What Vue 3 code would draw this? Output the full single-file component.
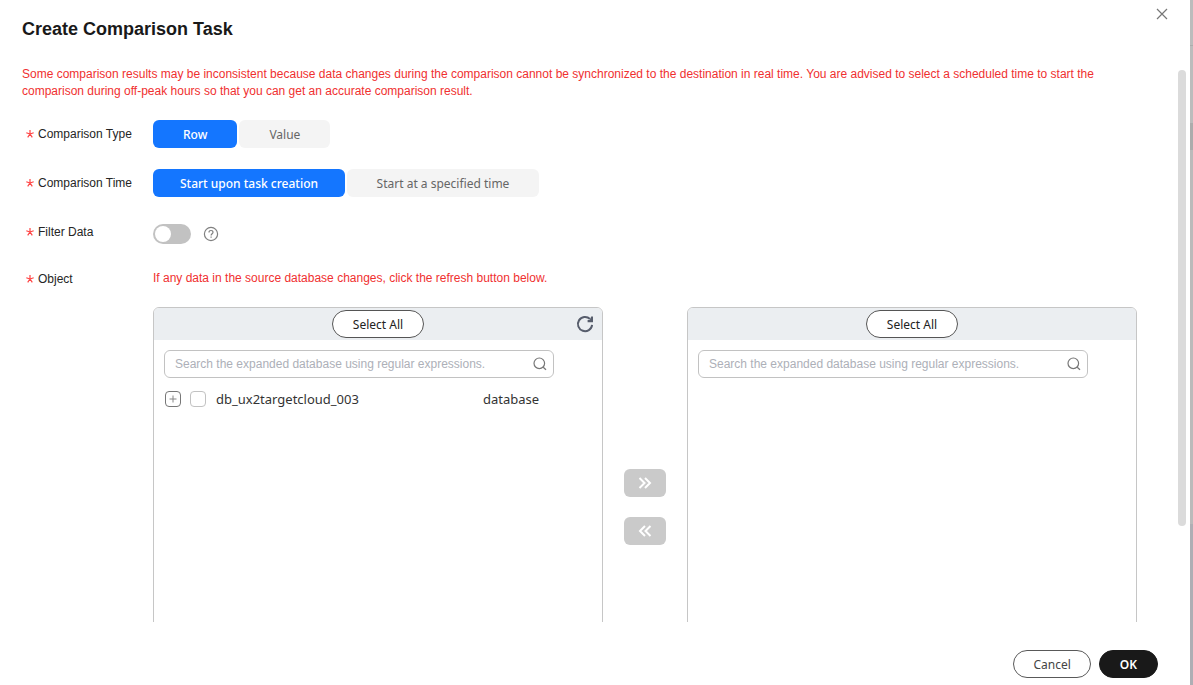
<script setup>
import { ref } from 'vue'

const compareType = ref('row')
const compareTime = ref('now')
const filterData = ref(false)
const sourceQuery = ref('')
const targetQuery = ref('')
const picked = ref(false)
</script>

<template>
  <div class="page">
    <section class="dialog" role="dialog" aria-labelledby="dialog-title">
      <header class="header">
        <h1 id="dialog-title">Create Comparison Task</h1>
        <button class="close" type="button" aria-label="Close">
          <svg width="12" height="12" viewBox="0 0 12 12"><path d="M1 1l10 10M11 1L1 11" /></svg>
        </button>
      </header>

      <div class="body">
        <div class="content">
          <p class="warning">
            Some comparison results may be inconsistent because data changes during the comparison cannot be synchronized to the destination in real time. You are advised to select a scheduled time to start the comparison during off-peak hours so that you can get an accurate comparison result.
          </p>

          <div class="form">
            <div class="row">
              <span id="type-label" class="label"><svg class="star" viewBox="0 0 8 8"><path d="M4 4V0M4 4L.3 2.8M4 4l3.7-1.2M4 4L1.7 7.4M4 4l2.3 3.4" /></svg>Comparison Type</span>
              <div class="options" role="group" aria-labelledby="type-label">
                <button type="button" :class="['option', { active: compareType === 'row' }]" @click="compareType = 'row'">Row</button>
                <button type="button" :class="['option', { active: compareType === 'value' }]" @click="compareType = 'value'">Value</button>
              </div>
            </div>
            <div class="row">
              <span id="time-label" class="label"><svg class="star" viewBox="0 0 8 8"><path d="M4 4V0M4 4L.3 2.8M4 4l3.7-1.2M4 4L1.7 7.4M4 4l2.3 3.4" /></svg>Comparison Time</span>
              <div class="options wide" role="group" aria-labelledby="time-label">
                <button type="button" :class="['option', { active: compareTime === 'now' }]" @click="compareTime = 'now'">Start upon task creation</button>
                <button type="button" :class="['option', { active: compareTime === 'later' }]" @click="compareTime = 'later'">Start at a specified time</button>
              </div>
            </div>
            <div class="row">
              <label class="label" for="filter"><svg class="star" viewBox="0 0 8 8"><path d="M4 4V0M4 4L.3 2.8M4 4l3.7-1.2M4 4L1.7 7.4M4 4l2.3 3.4" /></svg>Filter Data</label>
              <div class="filter">
                <input id="filter" v-model="filterData" class="switch" type="checkbox" role="switch" />
                <button class="help" type="button" aria-label="Help">
                  <svg width="16" height="16" viewBox="0 0 16 16">
                    <circle cx="8" cy="8" r="6.6" />
                    <path d="M6 6.5C6 5.2 6.8 4.5 8 4.5s2 .7 2 1.8c0 1.4-1.9 1.5-1.9 3.1M8.1 10.5v1.2" />
                  </svg>
                </button>
              </div>
            </div>
            <div class="row object-row">
              <span class="label"><svg class="star" viewBox="0 0 8 8"><path d="M4 4V0M4 4L.3 2.8M4 4l3.7-1.2M4 4L1.7 7.4M4 4l2.3 3.4" /></svg>Object</span>
              <p class="hint">If any data in the source database changes, click the refresh button below.</p>
            </div>
          </div>

          <div class="transfer">
            <section class="panel">
              <div class="panel-head">
                <button class="pill" type="button">Select All</button>
                <button class="refresh" type="button" aria-label="Refresh">
                  <svg width="18" height="18" viewBox="0 0 18 18">
                    <path class="arc" d="M14 4A7.1 7.1 0 1 0 16.1 9.8" />
                    <path class="tip" d="M17 1.6v5.6h-5.4V5h2.2l1.4-3.4z" />
                  </svg>
                </button>
              </div>
              <div class="search">
                <input v-model="sourceQuery" type="text" aria-label="Search source objects" placeholder="Search the expanded database using regular expressions." />
                <svg width="14" height="14" viewBox="0 0 14 14"><circle cx="6.3" cy="6.3" r="5.3" /><path d="M10.2 10.2l2.8 2.6" /></svg>
              </div>
              <div class="tree-row">
                <button class="expand" type="button" aria-label="Expand db_ux2targetcloud_003">
                  <svg width="8" height="8" viewBox="0 0 8 8"><path d="M4 .5v7M.5 4h7" /></svg>
                </button>
                <input id="db" v-model="picked" class="check" type="checkbox" />
                <label class="name" for="db">db_ux2targetcloud_003</label>
                <span class="kind">database</span>
              </div>
            </section>

            <div class="moves">
              <button type="button" aria-label="Add selected" disabled>
                <svg width="14" height="12" viewBox="0 0 14 12"><path d="M1.5 1l5 5-5 5M7 1l5 5-5 5" /></svg>
              </button>
              <button type="button" aria-label="Remove selected" disabled>
                <svg width="14" height="12" viewBox="0 0 14 12"><path d="M7 1L2 6l5 5M12.5 1l-5 5 5 5" /></svg>
              </button>
            </div>

            <section class="panel">
              <div class="panel-head">
                <button class="pill" type="button">Select All</button>
              </div>
              <div class="search">
                <input v-model="targetQuery" type="text" aria-label="Search selected objects" placeholder="Search the expanded database using regular expressions." />
                <svg width="14" height="14" viewBox="0 0 14 14"><circle cx="6.3" cy="6.3" r="5.3" /><path d="M10.2 10.2l2.8 2.6" /></svg>
              </div>
            </section>
          </div>
        </div>
        <div class="track"><div class="thumb"></div></div>
      </div>

      <footer class="footer">
        <button class="action" type="button">Cancel</button>
        <button class="action primary" type="button">OK</button>
      </footer>
    </section>
    <div class="backdrop"></div>
  </div>
</template>

<style>
body {
  margin: 0;
}
</style>

<style scoped>
* {
  box-sizing: border-box;
}
.page {
  display: flex;
  height: 100vh;
  overflow: hidden;
  background: #fff;
  color: #252b3a;
  font-family: "Liberation Sans", Arial, sans-serif;
  font-size: 12px;
}
button {
  padding: 0;
  border: 0;
  background: none;
  font-family: "Noto Sans", sans-serif;
  font-size: 12px;
  cursor: pointer;
}
svg {
  display: block;
  fill: none;
}
.dialog {
  position: relative;
  display: flex;
  flex: 1;
  flex-direction: column;
  min-width: 0;
}
.backdrop {
  width: 3px;
  background: linear-gradient(#bcbcbc 0 45px, #acacac 45px 46px, #bcbcbc 46px 123px, #acacac 123px 150px, #bababa 150px 524px, #aeaeb4 524px);
}
.header {
  height: 66px;
  padding: 17px 22px 0;
}
h1 {
  margin: 0;
  color: #191919;
  font-size: 18px;
  line-height: 24px;
}
.close {
  position: absolute;
  top: 8px;
  right: 22px;
}
.close svg {
  stroke: #777;
  stroke-width: 1.2;
}
.body {
  display: flex;
  flex: 1;
  min-height: 0;
}
.content {
  flex: 1;
  min-width: 0;
  padding: 0 41px 0 22px;
  overflow: hidden;
}
.warning,
.hint {
  margin: 0;
  color: #f03030;
  line-height: 17px;
}
.form {
  display: flex;
  flex-direction: column;
  gap: 21px;
  margin-top: 20px;
}
.row {
  display: flex;
  align-items: center;
  height: 28px;
}
.object-row {
  height: 24px;
}
.hint {
  padding-bottom: 2px;
}
.label {
  display: flex;
  align-items: center;
  width: 131px;
  padding-left: 4px;
  color: #252525;
}
.star {
  width: 8px;
  height: 8px;
  margin-right: 4px;
  overflow: visible;
  stroke: #f44;
  stroke-width: 1.2;
}
.options {
  display: flex;
  gap: 2px;
}
.option {
  height: 28px;
  padding: 0 30px;
  border-radius: 6px;
  background: #f4f4f4;
  color: #666;
}
.wide .option {
  min-width: 192px;
  padding: 0 20px;
}
.option.active {
  background: #1476ff;
  color: #fff;
  font-weight: 500;
}
.filter {
  display: flex;
  align-items: center;
  gap: 12px;
  padding-top: 4px;
}
.switch {
  display: flex;
  align-items: center;
  appearance: none;
  width: 38px;
  height: 20px;
  margin: 0;
  padding: 2px;
  border-radius: 10px;
  background: #c2c2c2;
}
.switch::before {
  width: 16px;
  height: 16px;
  border-radius: 50%;
  background: #fff;
  content: "";
}
.switch:checked {
  justify-content: flex-end;
  background: #1476ff;
}
.help svg {
  stroke: #808080;
  stroke-width: 1.2;
}
.transfer {
  display: flex;
  height: 400px;
  margin: 16px 0 20px 131px;
}
.panel {
  flex: 1;
  min-width: 0;
  border: 1px solid #c6c6c6;
  border-radius: 6px;
  overflow: hidden;
}
.panel-head {
  position: relative;
  display: flex;
  align-items: center;
  justify-content: center;
  height: 32px;
  background: #ebeef1;
}
.pill {
  width: 92px;
  height: 28px;
  border: 1px solid #555;
  border-radius: 14px;
  background: #fff;
  color: #222;
}
.refresh {
  position: absolute;
  top: 7px;
  right: 8px;
}
.arc {
  stroke: #575d6c;
  stroke-width: 2;
}
.tip {
  fill: #575d6c;
}
.search {
  display: flex;
  align-items: center;
  height: 28px;
  margin: 10px 48px 0 10px;
  padding: 0 6px 0 10px;
  border: 1px solid #c2c2c2;
  border-radius: 6px;
}
.search input {
  flex: 1;
  min-width: 0;
  padding: 0;
  border: 0;
  outline: 0;
  font: inherit;
}
.search input::placeholder {
  color: #adb0b8;
  opacity: 1;
}
.search svg {
  stroke: #777;
  stroke-width: 1.2;
}
.tree-row {
  display: flex;
  align-items: center;
  height: 20px;
  margin-top: 11px;
  padding-left: 11px;
  color: #333;
  font-family: "Noto Sans", sans-serif;
  font-size: 13px;
}
.expand {
  display: flex;
  align-items: center;
  justify-content: center;
  width: 16px;
  height: 16px;
  border: 1px solid #777;
  border-radius: 4px;
}
.expand svg {
  stroke: #888;
}
.check {
  appearance: none;
  width: 16px;
  height: 16px;
  margin: 0 10px 0 9px;
  border: 1px solid #c2c2c2;
  border-radius: 4px;
}
.check:checked {
  background: #1476ff;
}
.name {
  flex: 1;
}
.kind {
  width: 119px;
}
.moves {
  display: flex;
  flex-direction: column;
  align-items: center;
  justify-content: center;
  gap: 20px;
  width: 84px;
}
.moves button {
  display: flex;
  align-items: center;
  justify-content: center;
  width: 42px;
  height: 28px;
  border-radius: 6px;
  background: #cacaca;
}
.moves svg {
  stroke: #fff;
  stroke-width: 2;
}
.track {
  width: 12px;
  padding: 4px 4px 0 0;
}
.thumb {
  height: calc(100% - 96px);
  border-radius: 4px;
  background: #dbdbdb;
}
.footer {
  display: flex;
  justify-content: flex-end;
  gap: 8px;
  height: 63px;
  padding: 28px 32px 0 0;
}
.action {
  height: 28px;
  padding: 0 19px;
  border: 1px solid #595959;
  border-radius: 14px;
  background: #fff;
  color: #444;
}
.action.primary {
  padding: 0 20px;
  border-color: #191919;
  background: #191919;
  color: #fff;
  font-weight: 600;
}
</style>
